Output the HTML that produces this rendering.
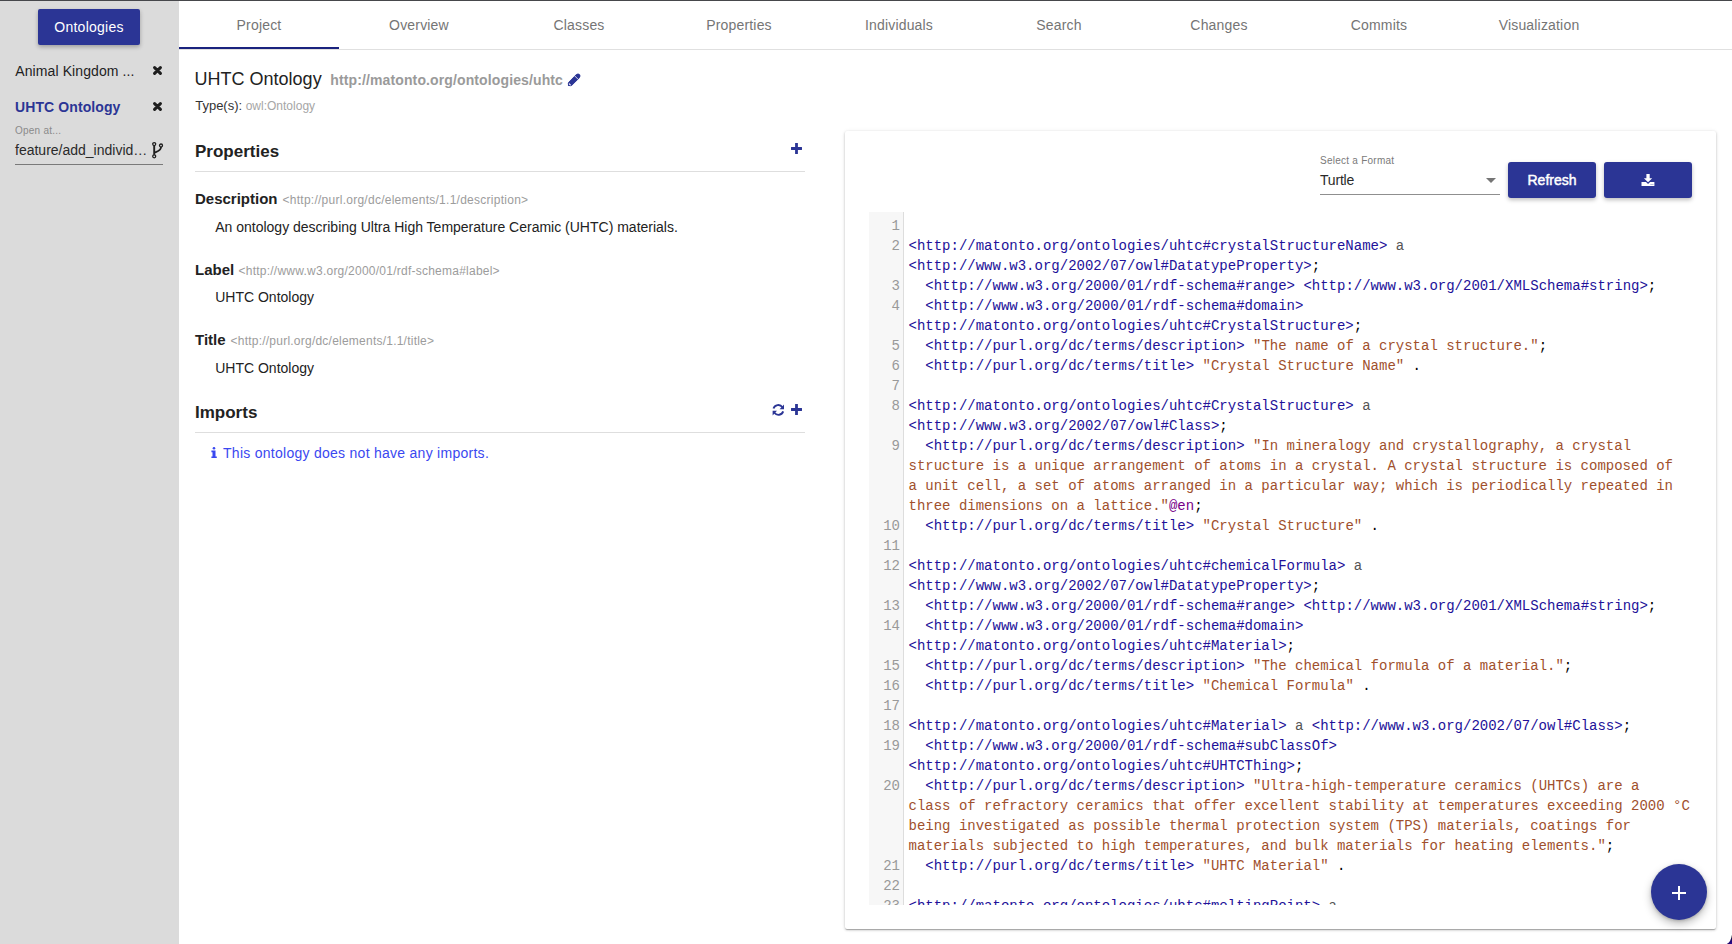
<!DOCTYPE html><html><head><meta charset="utf-8"><style>
html,body{margin:0;padding:0;}
body{width:1732px;height:944px;overflow:hidden;background:#fff;position:relative;font-family:'Liberation Sans', sans-serif;}
.t{position:absolute;white-space:nowrap;}
.r{position:absolute;}
.clip{position:absolute;overflow:hidden;}
.gut{position:absolute;left:0;width:34px;}
.cn{height:20px;line-height:20px;font-family:'Liberation Mono', monospace;font-size:14px;color:#999;text-align:right;padding-right:3px;box-sizing:border-box;width:34px;}
.code{position:absolute;left:39.5px;width:800px;}
.cl{height:20px;line-height:20px;font-family:'Liberation Mono', monospace;font-size:14px;color:#000;white-space:pre;}
.a{color:#221199} .s{color:#a0502d} .m{color:#555} .k{color:#770088}
</style></head><body><div class="r" style="left:0px;top:0px;width:1732px;height:1px;background:#46474b"></div><div class="r" style="left:0px;top:1px;width:179px;height:943px;background:#dbdbdb"></div><div class="r" style="left:38px;top:9px;width:102px;height:36px;background:#2b3595;border-radius:2px;box-shadow:0 2px 4px rgba(0,0,0,.28)"></div><div class="t" style="left:38.0px;width:102px;text-align:center;top:18.35px;font-size:14px;line-height:18px;color:#fff;font-weight:normal;font-family:'Liberation Sans', sans-serif;letter-spacing:0.26px;">Ontologies</div><div class="t" style="left:15.3px;top:62.15px;font-size:14px;line-height:18px;color:#1e1e1e;font-weight:normal;font-family:'Liberation Sans', sans-serif;letter-spacing:0.1px;">Animal Kingdom ...</div><div class="t" style="left:15px;top:97.95px;font-size:14px;line-height:18px;color:#2b3595;font-weight:bold;font-family:'Liberation Sans', sans-serif;letter-spacing:0.1px;">UHTC Ontology</div><svg class="r" style="left:153.0px;top:66.0px" width="9" height="9" viewBox="0 0 9 9"><path d="M1.6 1.6 L7.4 7.4 M7.4 1.6 L1.6 7.4" stroke="#1e1e1e" stroke-width="3" stroke-linecap="round"/></svg><svg class="r" style="left:153.0px;top:102.0px" width="9" height="9" viewBox="0 0 9 9"><path d="M1.6 1.6 L7.4 7.4 M7.4 1.6 L1.6 7.4" stroke="#1e1e1e" stroke-width="3" stroke-linecap="round"/></svg><div class="t" style="left:15px;top:124.53px;font-size:10px;line-height:12px;color:#8a8a8a;font-weight:normal;font-family:'Liberation Sans', sans-serif;letter-spacing:0.23px;">Open at...</div><div class="t" style="left:15px;top:141.15px;font-size:14px;line-height:18px;color:#2a2a2a;font-weight:normal;font-family:'Liberation Sans', sans-serif;">feature/add_individ…</div><svg class="r" style="left:151px;top:141px" width="13" height="18" viewBox="0 0 13 18"><g fill="none" stroke="#1e1e1e"><circle cx="3.2" cy="3.1" r="1.5" stroke-width="1.3"/><circle cx="10" cy="4.5" r="1.5" stroke-width="1.3"/><circle cx="3.2" cy="15.3" r="1.5" stroke-width="1.3"/><path d="M3.2 4.6 V13.8" stroke-width="1.9"/><path d="M10 6 C10 10 6.5 10.2 3.4 11.6" stroke-width="1.7"/></g></svg><div class="r" style="left:15px;top:164px;width:148px;height:1px;background:#7a7a7a"></div><div class="r" style="left:179px;top:49px;width:1553px;height:1px;background:#e0e0e0"></div><div class="t" style="left:179.0px;width:160px;text-align:center;top:16.15px;font-size:14px;line-height:18px;color:#757575;font-weight:normal;font-family:'Liberation Sans', sans-serif;letter-spacing:0.18px;">Project</div><div class="t" style="left:339.0px;width:160px;text-align:center;top:16.15px;font-size:14px;line-height:18px;color:#757575;font-weight:normal;font-family:'Liberation Sans', sans-serif;letter-spacing:0.18px;">Overview</div><div class="t" style="left:499.0px;width:160px;text-align:center;top:16.15px;font-size:14px;line-height:18px;color:#757575;font-weight:normal;font-family:'Liberation Sans', sans-serif;letter-spacing:0.18px;">Classes</div><div class="t" style="left:659.0px;width:160px;text-align:center;top:16.15px;font-size:14px;line-height:18px;color:#757575;font-weight:normal;font-family:'Liberation Sans', sans-serif;letter-spacing:0.18px;">Properties</div><div class="t" style="left:819.0px;width:160px;text-align:center;top:16.15px;font-size:14px;line-height:18px;color:#757575;font-weight:normal;font-family:'Liberation Sans', sans-serif;letter-spacing:0.18px;">Individuals</div><div class="t" style="left:979.0px;width:160px;text-align:center;top:16.15px;font-size:14px;line-height:18px;color:#757575;font-weight:normal;font-family:'Liberation Sans', sans-serif;letter-spacing:0.18px;">Search</div><div class="t" style="left:1139.0px;width:160px;text-align:center;top:16.15px;font-size:14px;line-height:18px;color:#757575;font-weight:normal;font-family:'Liberation Sans', sans-serif;letter-spacing:0.18px;">Changes</div><div class="t" style="left:1299.0px;width:160px;text-align:center;top:16.15px;font-size:14px;line-height:18px;color:#757575;font-weight:normal;font-family:'Liberation Sans', sans-serif;letter-spacing:0.18px;">Commits</div><div class="t" style="left:1459.0px;width:160px;text-align:center;top:16.15px;font-size:14px;line-height:18px;color:#757575;font-weight:normal;font-family:'Liberation Sans', sans-serif;letter-spacing:0.18px;">Visualization</div><div class="r" style="left:179px;top:47px;width:160px;height:2px;background:#1a237e"></div><div class="t" style="left:194.6px;top:68.26px;font-size:18px;line-height:22px;color:#222;font-weight:normal;font-family:'Liberation Sans', sans-serif;">UHTC Ontology</div><div class="t" style="left:330.3px;top:71.35px;font-size:14px;line-height:18px;color:#9a9a9a;font-weight:bold;font-family:'Liberation Sans', sans-serif;letter-spacing:0.12px;">http://matonto.org/ontologies/uhtc</div><svg class="r" style="left:567px;top:73px" width="14" height="14" viewBox="0 0 14 14"><path d="M3.2 10.8 L11.0 3.0" stroke="#2b3595" stroke-width="4.6" stroke-linecap="round"/><path d="M3.2 10.8 L11.0 3.0" stroke="#2b3595" stroke-width="4.6"/><path d="M1.57 9.17 L4.83 12.43 L0.9 13.1 Z" fill="#2b3595"/><path d="M7.6 2.8 L11.1 6.3" stroke="#fff" stroke-width="0.8"/><path d="M2.3 10.9 L3.3 11.9" stroke="#fff" stroke-width="1.1" stroke-linecap="round"/></svg><div class="t" style="left:195.2px;top:98.09px;font-size:13px;line-height:16px;color:#333;font-weight:normal;font-family:'Liberation Sans', sans-serif;">Type(s):</div><div class="t" style="left:245.7px;top:98.94px;font-size:12px;line-height:15px;color:#a6a6a6;font-weight:normal;font-family:'Liberation Sans', sans-serif;">owl:Ontology</div><div class="t" style="left:195px;top:141.11px;font-size:17px;line-height:21px;color:#222;font-weight:bold;font-family:'Liberation Sans', sans-serif;">Properties</div><svg class="r" style="left:791px;top:143px" width="11" height="11" viewBox="0 0 11 11"><path d="M5.5 0.5 V10.5 M0.5 5.5 H10.5" stroke="#2b3595" stroke-width="2.8" stroke-linecap="round"/></svg><div class="r" style="left:195px;top:171px;width:610px;height:1px;background:#dedede"></div><div class="t" style="left:195px;top:189.30px;font-size:15px;line-height:19px;color:#222;font-weight:bold;font-family:'Liberation Sans', sans-serif;">Description</div><div class="t" style="left:282.5px;top:193.34px;font-size:12px;line-height:15px;color:#9c9c9c;font-weight:normal;font-family:'Liberation Sans', sans-serif;letter-spacing:0.26px;">&lt;http://purl.org/dc/elements/1.1/description&gt;</div><div class="t" style="left:215.2px;top:218.15px;font-size:14px;line-height:18px;color:#222;font-weight:normal;font-family:'Liberation Sans', sans-serif;">An ontology describing Ultra High Temperature Ceramic (UHTC) materials.</div><div class="t" style="left:195px;top:260.30px;font-size:15px;line-height:19px;color:#222;font-weight:bold;font-family:'Liberation Sans', sans-serif;">Label</div><div class="t" style="left:238.5px;top:264.34px;font-size:12px;line-height:15px;color:#9c9c9c;font-weight:normal;font-family:'Liberation Sans', sans-serif;letter-spacing:0.24px;">&lt;http://www.w3.org/2000/01/rdf-schema#label&gt;</div><div class="t" style="left:215.2px;top:288.15px;font-size:14px;line-height:18px;color:#222;font-weight:normal;font-family:'Liberation Sans', sans-serif;">UHTC Ontology</div><div class="t" style="left:195px;top:330.30px;font-size:15px;line-height:19px;color:#222;font-weight:bold;font-family:'Liberation Sans', sans-serif;">Title</div><div class="t" style="left:230.5px;top:334.34px;font-size:12px;line-height:15px;color:#9c9c9c;font-weight:normal;font-family:'Liberation Sans', sans-serif;letter-spacing:0.23px;">&lt;http://purl.org/dc/elements/1.1/title&gt;</div><div class="t" style="left:215.2px;top:359.15px;font-size:14px;line-height:18px;color:#222;font-weight:normal;font-family:'Liberation Sans', sans-serif;">UHTC Ontology</div><div class="t" style="left:195px;top:402.41px;font-size:17px;line-height:21px;color:#222;font-weight:bold;font-family:'Liberation Sans', sans-serif;">Imports</div><svg class="r" style="left:772px;top:404px" width="13" height="12" viewBox="0 0 13 12"><g fill="none" stroke="#2b3595" stroke-width="1.9"><path d="M1.5 4.6 A5 5 0 0 1 10.4 3.2"/><path d="M11.2 7.4 A5 5 0 0 1 2.4 8.8"/></g><g fill="#2b3595"><path d="M12 0.6 V5.2 H7.6 Z"/><path d="M0.6 11.4 V6.8 H5 Z"/></g></svg><svg class="r" style="left:791px;top:404px" width="11" height="11" viewBox="0 0 11 11"><path d="M5.5 0.5 V10.5 M0.5 5.5 H10.5" stroke="#2b3595" stroke-width="2.8" stroke-linecap="round"/></svg><div class="r" style="left:195px;top:432px;width:610px;height:1px;background:#dedede"></div><svg class="r" style="left:211px;top:447px" width="6" height="11" viewBox="0 0 6 11"><circle cx="3" cy="1.3" r="1.3" fill="#3a48f0"/><path fill="#3a48f0" d="M0.4 3.6 H4.5 V9.4 H5.8 V11 H0.4 V9.4 H1.5 V5.2 H0.4 Z"/></svg><div class="t" style="left:223px;top:443.75px;font-size:14px;line-height:18px;color:#3a48f0;font-weight:normal;font-family:'Liberation Sans', sans-serif;letter-spacing:0.27px;">This ontology does not have any imports.</div><div class="r" style="left:845px;top:131px;width:871px;height:798px;background:#fff;border-radius:2px;box-shadow:0 1px 3px rgba(0,0,0,.2),0 1px 1px rgba(0,0,0,.14),0 2px 1px -1px rgba(0,0,0,.12),0 0 5px rgba(0,0,0,.05)"></div><div class="t" style="left:1320px;top:154.53px;font-size:10px;line-height:12px;color:#7a7a7a;font-weight:normal;font-family:'Liberation Sans', sans-serif;letter-spacing:0.25px;">Select a Format</div><div class="t" style="left:1320px;top:170.75px;font-size:14px;line-height:18px;color:#2a2a2a;font-weight:normal;font-family:'Liberation Sans', sans-serif;letter-spacing:-0.2px;">Turtle</div><svg class="r" style="left:1486px;top:178px" width="10" height="5" viewBox="0 0 10 5"><path d="M0 0 H10 L5 5 Z" fill="#757575"/></svg><div class="r" style="left:1320px;top:194px;width:180px;height:1px;background:#8f8f8f"></div><div class="r" style="left:1508px;top:162px;width:88px;height:36px;background:#2b3595;border-radius:3px;box-shadow:0 2px 4px rgba(0,0,0,.26)"></div><div class="t" style="left:1508.0px;width:88px;text-align:center;top:171.45px;font-size:14px;line-height:18px;color:#fff;font-weight:normal;font-family:'Liberation Sans', sans-serif;-webkit-text-stroke:0.45px #fff;">Refresh</div><div class="r" style="left:1604px;top:162px;width:88px;height:36px;background:#2b3595;border-radius:3px;box-shadow:0 2px 4px rgba(0,0,0,.26)"></div><svg class="r" style="left:1641px;top:174px" width="14" height="12" viewBox="0 0 14 12"><g fill="#fff"><path d="M5.4 0 H8.7 V4.2 H11.2 L7.05 8.2 L2.9 4.2 H5.4 Z"/><path d="M0.5 8.1 H5 L7.05 10 L9.1 8.1 H13.4 V11.9 H0.5 Z"/></g><path d="M9.3 10.4 H12.6" stroke="#2b3595" stroke-width="0.6" opacity="0.6"/></svg><div class="r" style="left:869px;top:212px;width:34px;height:693px;background:#f7f7f7"></div><div class="r" style="left:903px;top:212px;width:1px;height:693px;background:#ddd"></div><div class="clip" style="left:869px;top:212px;width:823px;height:693px;"><div class="gut" style="top:4px"><div class="cn">1</div><div class="cn">2</div><div class="cn"></div><div class="cn">3</div><div class="cn">4</div><div class="cn"></div><div class="cn">5</div><div class="cn">6</div><div class="cn">7</div><div class="cn">8</div><div class="cn"></div><div class="cn">9</div><div class="cn"></div><div class="cn"></div><div class="cn"></div><div class="cn">10</div><div class="cn">11</div><div class="cn">12</div><div class="cn"></div><div class="cn">13</div><div class="cn">14</div><div class="cn"></div><div class="cn">15</div><div class="cn">16</div><div class="cn">17</div><div class="cn">18</div><div class="cn">19</div><div class="cn"></div><div class="cn">20</div><div class="cn"></div><div class="cn"></div><div class="cn"></div><div class="cn">21</div><div class="cn">22</div><div class="cn">23</div></div><div class="code" style="top:4px"><div class="cl"></div><div class="cl"><span class="a">&lt;http://matonto.org/ontologies/uhtc#crystalStructureName&gt;</span> <span class="m">a</span></div><div class="cl"><span class="a">&lt;http://www.w3.org/2002/07/owl#DatatypeProperty&gt;</span>;</div><div class="cl">  <span class="a">&lt;http://www.w3.org/2000/01/rdf-schema#range&gt;</span> <span class="a">&lt;http://www.w3.org/2001/XMLSchema#string&gt;</span>;</div><div class="cl">  <span class="a">&lt;http://www.w3.org/2000/01/rdf-schema#domain&gt;</span></div><div class="cl"><span class="a">&lt;http://matonto.org/ontologies/uhtc#CrystalStructure&gt;</span>;</div><div class="cl">  <span class="a">&lt;http://purl.org/dc/terms/description&gt;</span> <span class="s">&quot;The name of a crystal structure.&quot;</span>;</div><div class="cl">  <span class="a">&lt;http://purl.org/dc/terms/title&gt;</span> <span class="s">&quot;Crystal Structure Name&quot;</span> .</div><div class="cl"></div><div class="cl"><span class="a">&lt;http://matonto.org/ontologies/uhtc#CrystalStructure&gt;</span> <span class="m">a</span></div><div class="cl"><span class="a">&lt;http://www.w3.org/2002/07/owl#Class&gt;</span>;</div><div class="cl">  <span class="a">&lt;http://purl.org/dc/terms/description&gt;</span> <span class="s">&quot;In mineralogy and crystallography, a crystal</span></div><div class="cl"><span class="s">structure is a unique arrangement of atoms in a crystal. A crystal structure is composed of</span></div><div class="cl"><span class="s">a unit cell, a set of atoms arranged in a particular way; which is periodically repeated in</span></div><div class="cl"><span class="s">three dimensions on a lattice.&quot;</span><span class="k">@en</span>;</div><div class="cl">  <span class="a">&lt;http://purl.org/dc/terms/title&gt;</span> <span class="s">&quot;Crystal Structure&quot;</span> .</div><div class="cl"></div><div class="cl"><span class="a">&lt;http://matonto.org/ontologies/uhtc#chemicalFormula&gt;</span> <span class="m">a</span></div><div class="cl"><span class="a">&lt;http://www.w3.org/2002/07/owl#DatatypeProperty&gt;</span>;</div><div class="cl">  <span class="a">&lt;http://www.w3.org/2000/01/rdf-schema#range&gt;</span> <span class="a">&lt;http://www.w3.org/2001/XMLSchema#string&gt;</span>;</div><div class="cl">  <span class="a">&lt;http://www.w3.org/2000/01/rdf-schema#domain&gt;</span></div><div class="cl"><span class="a">&lt;http://matonto.org/ontologies/uhtc#Material&gt;</span>;</div><div class="cl">  <span class="a">&lt;http://purl.org/dc/terms/description&gt;</span> <span class="s">&quot;The chemical formula of a material.&quot;</span>;</div><div class="cl">  <span class="a">&lt;http://purl.org/dc/terms/title&gt;</span> <span class="s">&quot;Chemical Formula&quot;</span> .</div><div class="cl"></div><div class="cl"><span class="a">&lt;http://matonto.org/ontologies/uhtc#Material&gt;</span> <span class="m">a</span> <span class="a">&lt;http://www.w3.org/2002/07/owl#Class&gt;</span>;</div><div class="cl">  <span class="a">&lt;http://www.w3.org/2000/01/rdf-schema#subClassOf&gt;</span></div><div class="cl"><span class="a">&lt;http://matonto.org/ontologies/uhtc#UHTCThing&gt;</span>;</div><div class="cl">  <span class="a">&lt;http://purl.org/dc/terms/description&gt;</span> <span class="s">&quot;Ultra-high-temperature ceramics (UHTCs) are a</span></div><div class="cl"><span class="s">class of refractory ceramics that offer excellent stability at temperatures exceeding 2000 °C</span></div><div class="cl"><span class="s">being investigated as possible thermal protection system (TPS) materials, coatings for</span></div><div class="cl"><span class="s">materials subjected to high temperatures, and bulk materials for heating elements.&quot;</span>;</div><div class="cl">  <span class="a">&lt;http://purl.org/dc/terms/title&gt;</span> <span class="s">&quot;UHTC Material&quot;</span> .</div><div class="cl"></div><div class="cl"><span class="a">&lt;http://matonto.org/ontologies/uhtc#meltingPoint&gt;</span> <span class="m">a</span></div></div></div><div class="r" style="left:1651px;top:864px;width:56px;height:56px;background:#2b3595;border-radius:50%;box-shadow:0 4px 9px rgba(0,0,0,.26),0 1px 3px rgba(0,0,0,.18)"></div><div class="r" style="left:1672px;top:892px;width:14px;height:2px;background:#fff"></div><div class="r" style="left:1678px;top:886px;width:2px;height:14px;background:#fff"></div><svg class="r" style="left:1712px;top:924px" width="20" height="20" viewBox="0 0 20 20"><defs><radialGradient id="cg" cx="20" cy="20" r="8" gradientUnits="userSpaceOnUse"><stop offset="0" stop-color="#2e0a9a"/><stop offset="0.55" stop-color="#1a0660"/><stop offset="1" stop-color="#000"/></radialGradient></defs><path d="M20 10.8 Q18.8 18.4 14.8 20 L20 20 Z" fill="url(#cg)"/></svg></body></html>
